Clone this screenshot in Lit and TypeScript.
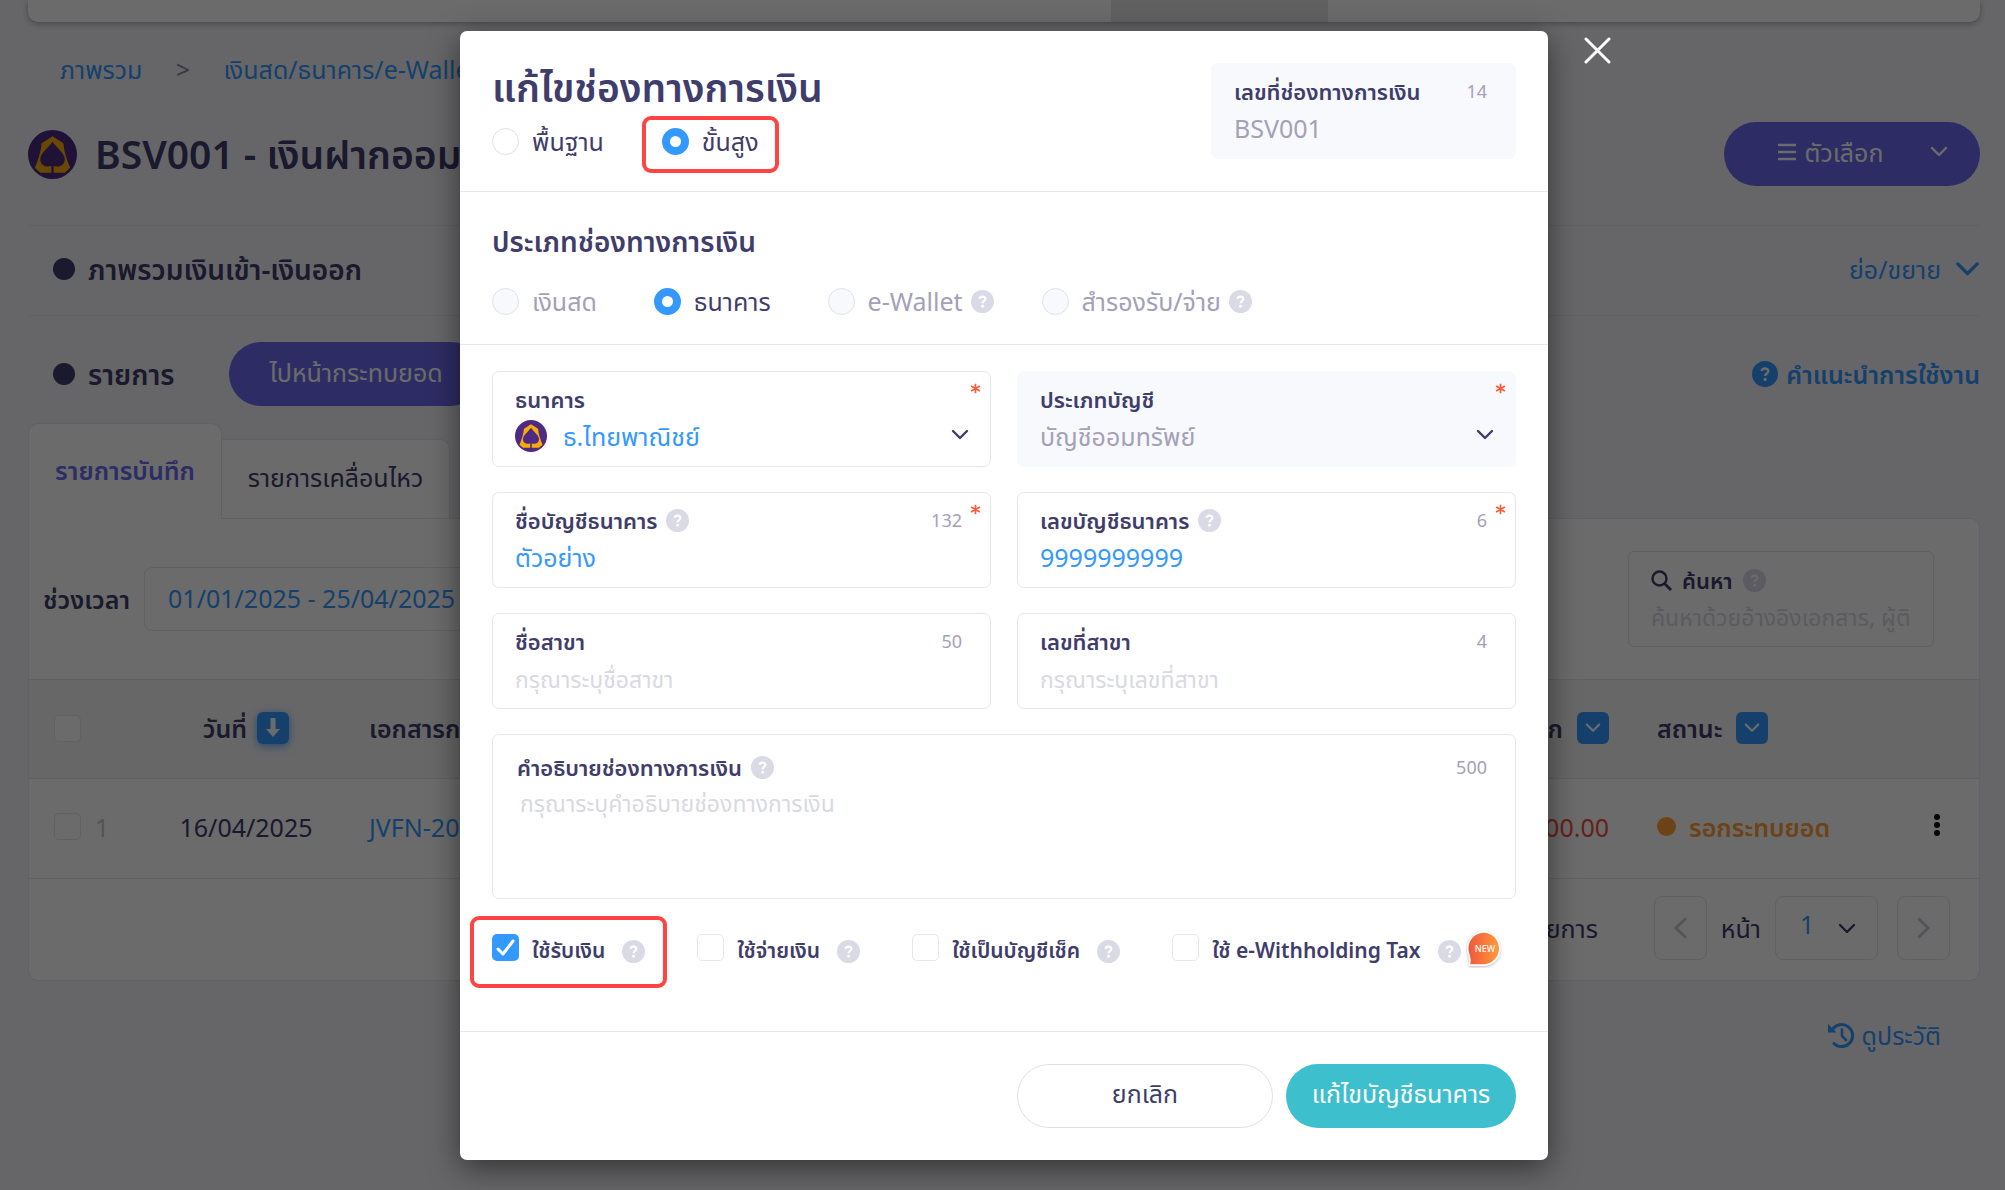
import { LitElement, html, css, svg } from "lit";
import { customElement, property } from "lit/decorators.js";

const chevron = (cls = "") => html`<svg class="chev ${cls}" viewBox="0 0 18 12" aria-hidden="true"><path d="M2 2l7 7 7-7" fill="none" stroke="currentColor" stroke-width="2.4" stroke-linecap="round" stroke-linejoin="round"/></svg>`;

const bankLogo = (cls = "") => html`<svg class="bank ${cls}" viewBox="0 0 50 50" aria-hidden="true">
  <circle cx="25" cy="25" r="25" fill="#4e2a84"/>
  <path fill="#fbaa0b" d="M25 6.500L36 13.500C37 23 39.500 30 43 38.500L37.500 43.500H26.200V36.800C32 38.500 37.500 35.500 37.500 30C37.500 24 31 20 25 12C19 20 12.500 24 12.500 30C12.500 35.500 18 38.500 23.800 36.800V43.500H12.500L7 38.500C10.500 30 13 23 14 13.500Z"/>
</svg>`;

@customElement("help-mark")
class HelpMark extends LitElement {
  @property() tone = "muted";
  static styles = css`
    :host { display: inline-flex; flex: none; width: 23px; height: 23px; color: #dadae6; }
    :host([tone="blue"]) { width: 26px; height: 26px; color: #3399ff; }
    svg { width: 100%; height: 100%; display: block; }
  `;
  render() {
    return html`<svg viewBox="0 0 24 24" aria-hidden="true"><circle cx="12" cy="12" r="12" fill="currentColor"/>${svg`<path d="M9 9.200c.2-3 6-3.200 6 0 0 2.300-2.900 2.300-2.900 4.700" fill="none" stroke="#fff" stroke-width="2.200"/><circle cx="12.100" cy="17" r="1.500" fill="#fff"/>`}</svg>`;
  }
}

interface Choice { label: string; checked?: boolean; disabled?: boolean; help?: boolean; mark?: boolean; badge?: boolean; }

@customElement("app-root")
class AppRoot extends LitElement {
  modes: Choice[] = [{ label: "พื้นฐาน" }, { label: "ขั้นสูง", checked: true, mark: true }];
  kinds: Choice[] = [
    { label: "เงินสด", disabled: true },
    { label: "ธนาคาร", checked: true },
    { label: "e-Wallet", disabled: true, help: true },
    { label: "สำรองรับ/จ่าย", disabled: true, help: true },
  ];
  uses: Choice[] = [
    { label: "ใช้รับเงิน", checked: true, mark: true },
    { label: "ใช้จ่ายเงิน" },
    { label: "ใช้เป็นบัญชีเช็ค" },
    { label: "ใช้ e-Withholding Tax", badge: true },
  ];

  static styles = css`
    :host {
      --ink: #3f3d6b; --blue: #3399ff; --purple: #6e69ee; --line: #e6e6ef; --grey: #a3a1b8;
      display: block; position: relative; min-height: 100vh; overflow: hidden;
      background: #f3f3f8; color: var(--ink);
      font-family: "Noto Sans", "Noto Sans Thai", sans-serif; font-size: 25px; line-height: 36px;
    }
    *, *::before, *::after { box-sizing: border-box; }
    button, input, select, textarea { font: inherit; color: inherit; margin: 0; padding: 0; border: 0; background: none; outline: 0; }
    select { appearance: none; }
    button { cursor: pointer; }
    a { color: var(--blue); text-decoration: none; }
    h1, h2, h3 { margin: 0; font-weight: 600; }
    .chev { width: 18px; height: 12px; flex: none; }
    .chev.big { width: 25px; height: 17px; }
    .bank { width: 49px; height: 49px; flex: none; }
    .bank.small { width: 32px; height: 32px; }

    .page { padding: 0 25px 0 28px; }
    .topbar { height: 22px; background: #fff; border-radius: 0 0 10px 10px; box-shadow: 0 2px 6px rgba(0,0,0,.3); display: grid; grid-template-columns: 1083fr 217fr 652fr; }
    .topbar i { grid-column: 2; background: #e4e4e6; }
    .crumbs { display: flex; padding: 29px 32px 0; height: 82px; }
    .crumbs span { width: 81px; text-align: center; color: #85849b; }
    .titlebar { display: flex; align-items: center; gap: 18px; height: 122px; border-bottom: 1px solid var(--line); padding-bottom: 21px; }
    .titlebar h1 { font-size: 39px; line-height: 56px; flex: 1; }
    .pill { height: 64px; border-radius: 32px; background: var(--purple); color: #fff; display: inline-flex; align-items: center; justify-content: center; padding-bottom: 4px; }
    .options { width: 256px; gap: 9px; padding-left: 22px; }
    .options .chev { margin-left: 38px; }
    .options .menu { width: 18px; height: 18px; }
    .section { display: flex; align-items: center; height: 90px; padding-left: 25px; gap: 13px; }
    .section.first { border-bottom: 1px solid var(--line); padding-bottom: 3px; }
    .section.list { height: 107px; padding-top: 8px; }
    .section h2 { font-size: 28px; }
    .dot { width: 22px; height: 22px; border-radius: 50%; background: var(--ink); flex: none; }
    .section .push { margin-left: auto; display: flex; align-items: center; gap: 14px; }
    .section .guide { font-weight: 600; gap: 8px; }
    .section .reconcile { padding: 0 40px 4px; margin-left: 42px; }
    .tabs { display: flex; align-items: flex-end; height: 96px; margin-bottom: -1px; position: relative; }
    .tab { background: #fff; border: 1px solid var(--line); display: flex; align-items: center; justify-content: center; padding-bottom: 4px; }
    .tab.on { height: 96px; width: 194px; border-radius: 10px 10px 0 0; border-bottom: 0; color: var(--purple); font-weight: 600; }
    .tab.off { height: 80px; width: 228px; border-radius: 0 10px 0 0; border-left: 0; }
    .card { background: #fff; border: 1px solid var(--line); border-radius: 0 10px 10px 10px; }
    .filters { display: flex; justify-content: space-between; align-items: center; height: 160px; padding: 0 45px 0 14px; }
    .period { display: flex; align-items: center; gap: 14px; font-weight: 600; }
    .period input { width: 336px; height: 64px; border: 1px solid var(--line); border-radius: 8px; padding: 0 23px 2px; color: var(--blue); font-weight: 400; }
    .search { width: 306px; height: 96px; border: 1px solid var(--line); border-radius: 6px; padding: 11px 22px 0; }
    .search label { display: flex; align-items: center; gap: 10px; font-size: 22px; line-height: 34px; font-weight: 600; }
    .search svg { width: 21px; height: 21px; }
    .search input { width: 100%; height: 40px; font-size: 23px; }
    ::placeholder { color: #d9d9e3; opacity: 1; }
    table { width: 100%; border-collapse: collapse; table-layout: fixed; }
    th { background: #f5f5f7; font-weight: 600; text-align: left; }
    th, td { height: 99px; padding: 0 0 4px; border-top: 1px solid var(--line); border-bottom: 1px solid var(--line); white-space: nowrap; }
    th { padding-bottom: 2px; }
    td { height: 100px; }
    .c1 { width: 94px; } .c2 { width: 246px; } .c4 { width: 300px; } .c5 { width: 276px; } .c6 { width: 46px; }
    .cell { display: flex; align-items: center; gap: 14px; }
    .cell.pad { padding-left: 25px; }
    .cell.mid { justify-content: center; gap: 10px; }
    .cell.end { justify-content: flex-end; padding-right: 48px; }
    .box { appearance: none; width: 27px; height: 27px; border: 1px solid var(--line); border-radius: 5px; flex: none; background: #fff; }
    .rowno { color: #c5c5cc; }
    .sq { width: 32px; height: 32px; border-radius: 6px; background: var(--blue); color: #fff; display: inline-flex; align-items: center; justify-content: center; }
    .sq.glow { box-shadow: 0 2px 8px rgba(51,153,255,.8); }
    .sq svg { width: 16px; }
    .sq.glow svg { height: 20px; }
    .out { color: #f0503a; }
    .status { color: #ff9f38; font-weight: 600; gap: 13px; }
    .status i { width: 19px; height: 19px; border-radius: 50%; background: #ff9f38; }
    .kebab svg { width: 8px; height: 24px; display: block; }
    .pager { display: flex; align-items: center; justify-content: flex-end; height: 101px; padding: 0 29px 4px 0; gap: 14px; }
    .pager button { width: 53px; height: 64px; border: 1px solid var(--line); border-radius: 8px; color: #c6c5d3; display: grid; place-items: center; }
    .pager button svg { width: 14px; height: 22px; }
    .pager .total { margin-right: 42px; }
    .pager .sel { position: relative; width: 103px; height: 64px; border: 1px solid var(--line); border-radius: 8px; display: flex; align-items: center; margin-right: 5px; }
    .pager select { width: 100%; height: 100%; padding: 0 0 8px 24px; color: var(--blue); }
    .sel .chev { position: absolute; right: 21px; top: 26px; pointer-events: none; }
    .history { display: flex; justify-content: flex-end; align-items: center; gap: 7px; padding: 36px 39px 0; }
    .history svg { width: 27px; height: 27px; }

    .overlay { position: absolute; inset: 0; background: rgba(0,0,0,.58); padding: 31px 24px 0 27px; display: flex; justify-content: center; align-items: flex-start; }
    .modal { position: relative; width: 100%; max-width: 1088px; background: #fff; border-radius: 7px; box-shadow: 0 8px 30px rgba(0,0,0,.5); }
    .close { position: absolute; left: 100%; top: 0; margin-left: 29px; width: 40px; height: 38px; display: grid; place-items: center; color: #fff; }
    .close svg { width: 27px; height: 27px; }
    .part { padding: 0 32px; border-bottom: 1px solid var(--line); }
    .head { display: flex; justify-content: space-between; align-items: flex-start; height: 161px; padding-top: 32px; }
    .head h2 { font-size: 39px; line-height: 48px; }
    .type { height: 153px; padding-top: 31px; }
    .type h3 { font-size: 28px; line-height: 36px; }
    .choices { display: flex; align-items: center; }
    .head .choices { gap: 58px; margin-top: 12px; }
    .type .choices { gap: 57px; margin-top: 24px; }
    .choice { display: flex; align-items: center; gap: 13px; position: relative; white-space: nowrap; }
    .choice.dim { color: var(--grey); }
    .type help-mark { margin: 0 -9px 0 -5px; }
    .choice.mark::after { content: ""; position: absolute; inset: -7px -20px -14px; border: 4px solid #ff4444; border-radius: 9px; pointer-events: none; }
    .radio { appearance: none; width: 27px; height: 27px; border-radius: 50%; border: 1px solid #e0e0ec; flex: none; background: #fff; }
    .radio:checked { border: 8px solid var(--blue); }
    .radio:disabled { background: #f8f9fd; }
    .form { padding-top: 26px; padding-bottom: 61px; display: grid; grid-template-columns: 1fr 1fr; gap: 25px 26px; }
    .field { position: relative; min-height: 96px; border: 1px solid var(--line); border-radius: 7px; padding: 13px 22px 0; display: flex; flex-direction: column; gap: 5px; }
    .field.off { background: #f8f9fd; border-color: #f8f9fd; }
    .field.num { width: 305px; }
    .top { display: flex; align-items: center; gap: 9px; line-height: 28px; }
    .top label { font-size: 22px; font-weight: 600; }
    .top output { margin-left: auto; font-size: 18px; color: var(--grey); margin-right: 6px; }
    .field input, .field select { width: 100%; height: 36px; flex: 1; min-width: 0; color: var(--blue); }
    .field.off input, .field.off select { color: var(--grey); opacity: 1; }
    .val { display: flex; align-items: center; gap: 16px; height: 36px; }
    .val .chev { color: var(--ink); position: absolute; right: 21px; top: 57px; pointer-events: none; }
    .star { position: absolute; right: 9px; top: 11px; width: 11px; height: 11px; color: #ff5a36; }
    .area { grid-column: 1 / -1; min-height: 165px; padding-top: 18px; padding-left: 24px; }
    .area textarea { width: 100%; height: 100px; resize: none; font-size: 23px; line-height: 34px; padding-left: 3px; }
    .field input::placeholder { font-size: 23px; }
    .uses { grid-column: 1 / -1; display: flex; align-items: center; gap: 52px; height: 46px; }
    .uses .choice { font-size: 21px; font-weight: 600; }
    .uses label { padding-top: 5px; }
    .uses .choice help-mark { margin: 8px 0 0 4px; }
    .uses .choice.mark::after { inset: -11px -22px -20px; }
    .uses .box:checked { border: 0; background: var(--blue); }
    .tick { position: absolute; left: 4px; top: 12px; width: 19px; height: 18px; pointer-events: none; }
    .badge { width: 37px; height: 38px; margin-left: -8px; margin-top: 4px; }
    .badge text { font-size: 9px; font-weight: 500; fill: #fff; }
    .foot { display: flex; justify-content: flex-end; gap: 13px; padding: 32px; }
    .foot button { height: 64px; border-radius: 32px; padding-bottom: 6px; }
    .foot .cancel { width: 256px; border: 1px solid #e0e0ec; }
    .foot .save { min-width: 230px; background: #3dbfcd; color: #fff; }
  `;

  choice(c: Choice, name: string, i: number) {
    const box = name === "use";
    return html`<div class="choice ${c.disabled ? "dim" : ""} ${c.mark ? "mark" : ""}">
      <input id="${name}${i}" class=${box ? "box" : "radio"} type=${box ? "checkbox" : "radio"} name=${name} ?checked=${c.checked} ?disabled=${c.disabled}>
      ${box && c.checked ? html`<svg class="tick" viewBox="0 0 19 18" aria-hidden="true"><path d="M2 10l5 5L17 2" fill="none" stroke="#fff" stroke-width="3" stroke-linecap="round" stroke-linejoin="round"/></svg>` : ""}
      <label for="${name}${i}">${c.label}</label>
      ${c.help || box ? html`<help-mark></help-mark>` : ""}
      ${c.badge ? html`<svg class="badge" viewBox="0 0 37 38"><defs><linearGradient id="g"><stop stop-color="#f1553a"/><stop offset="1" stop-color="#ff9c3c"/></linearGradient><filter id="s" x="-20%" y="-20%" width="140%" height="140%"><feDropShadow dx="0" dy="1" stdDeviation="1.500" flood-opacity=".3"/></filter></defs><path filter="url(#s)" d="M3.500 35C4.500 31 4.500 29 3 25A16 16.500 0 1 1 19 35Z" fill="url(#g)" stroke="#fff" stroke-width="1.500"/><text x="19" y="22" text-anchor="middle">NEW</text></svg>` : ""}
    </div>`;
  }

  top(id: string, label: string, count = "", help = false) {
    return html`<div class="top"><label for=${id}>${label}</label>${help ? html`<help-mark></help-mark>` : ""}${count ? html`<output>${count}</output>` : ""}</div>`;
  }

  star() {
    return html`<svg class="star" viewBox="0 0 12 12" aria-hidden="true"><path d="M6 .8v10.400M1.200 3.300l9.600 5.400M10.800 3.300L1.200 8.700" stroke="currentColor" stroke-width="1.800"/></svg>`;
  }

  text(id: string, label: string, count: string, o: { value?: string; hint?: string; help?: boolean; req?: boolean }) {
    return html`<div class="field">${this.top(id, label, count, o.help)}
      <div class="val"><input id=${id} type="text" .value=${o.value ?? ""} placeholder=${o.hint ?? ""}></div>${o.req ? this.star() : ""}</div>`;
  }

  render() {
    return html`
      <main class="page">
        <div class="topbar"><i></i></div>
        <nav class="crumbs"><a href="#overview">ภาพรวม</a><span>&gt;</span><a href="#finance">เงินสด/ธนาคาร/e-Wallet</a></nav>
        <header class="titlebar">${bankLogo()}<h1>BSV001 - เงินฝากออม</h1>
          <button class="pill options"><svg class="menu" viewBox="0 0 18 18" aria-hidden="true"><path d="M0 2h18M0 9h18M0 16h18" stroke="currentColor" stroke-width="2.400"/></svg>ตัวเลือก${chevron()}</button>
        </header>
        <section class="section first"><i class="dot"></i><h2>ภาพรวมเงินเข้า-เงินออก</h2><a class="push" href="#toggle">ย่อ/ขยาย${chevron("big")}</a></section>
        <section class="section list"><i class="dot"></i><h2>รายการ</h2><button class="pill reconcile">ไปหน้ากระทบยอด</button>
          <a class="push guide" href="#guide"><help-mark tone="blue"></help-mark>คำแนะนำการใช้งาน</a></section>
        <div class="tabs"><button class="tab on">รายการบันทึก</button><button class="tab off">รายการเคลื่อนไหว</button></div>
        <section class="card">
          <div class="filters">
            <div class="period"><label for="period">ช่วงเวลา</label><input id="period" type="text" value="01/01/2025 - 25/04/2025"></div>
            <div class="search"><label for="q"><svg viewBox="0 0 21 21" aria-hidden="true"><circle cx="8.500" cy="8.500" r="7" fill="none" stroke="currentColor" stroke-width="2.400"/><path d="M13.500 13.500L20 20" stroke="currentColor" stroke-width="2.800"/></svg>ค้นหา<help-mark></help-mark></label>
              <input id="q" type="text" placeholder="ค้นหาด้วยอ้างอิงเอกสาร, ผู้ติดต่อ"></div>
          </div>
          <table>
            <colgroup><col class="c1"><col class="c2"><col><col class="c4"><col class="c5"><col class="c6"></colgroup>
            <thead><tr>
              <th><div class="cell pad"><input class="box" type="checkbox" aria-label="เลือกทั้งหมด"></div></th>
              <th><div class="cell mid">วันที่<button class="sq glow" aria-label="เรียงลำดับ"><svg viewBox="0 0 14 20" aria-hidden="true"><path d="M4.500 0h5v11H14l-7 8-7-8h4.500z" fill="currentColor"/></svg></button></div></th>
              <th>เอกสารการเงิน</th>
              <th><div class="cell end">เงินออก<button class="sq" aria-label="กรองเงินออก">${chevron()}</button></div></th>
              <th><div class="cell">สถานะ<button class="sq" aria-label="กรองสถานะ">${chevron()}</button></div></th>
              <th></th>
            </tr></thead>
            <tbody><tr>
              <td><div class="cell pad"><input class="box" type="checkbox" aria-label="เลือกแถว 1"><span class="rowno">1</span></div></td>
              <td><div class="cell mid">16/04/2025</div></td>
              <td><a href="#doc">JVFN-20250400001</a></td>
              <td><div class="cell end out">1,000.00</div></td>
              <td><div class="cell status"><i></i>รอกระทบยอด</div></td>
              <td><button class="kebab" aria-label="เมนู"><svg viewBox="0 0 8 24" fill="#101014" aria-hidden="true"><circle cx="4" cy="4" r="3"/><circle cx="4" cy="12" r="3"/><circle cx="4" cy="20" r="3"/></svg></button></td>
            </tr></tbody>
          </table>
          <div class="pager"><span class="total">1 รายการ</span>
            <button aria-label="ก่อนหน้า"><svg viewBox="0 0 14 22"><path d="M12 2l-9 9 9 9" fill="none" stroke="currentColor" stroke-width="2.800" stroke-linecap="round"/></svg></button>
            <label for="pg">หน้า</label><span class="sel"><select id="pg"><option>1</option></select>${chevron()}</span>
            <button aria-label="ถัดไป"><svg viewBox="0 0 14 22"><path d="M2 2l9 9-9 9" fill="none" stroke="currentColor" stroke-width="2.800" stroke-linecap="round"/></svg></button></div>
        </section>
        <a class="history" href="#history"><svg viewBox="0 0 27 27" aria-hidden="true"><path d="M4.500 7.500A11 11 0 1 1 6 21.500" fill="none" stroke="currentColor" stroke-width="3" stroke-linecap="round"/><path d="M0 2v8.500h8.500z" fill="currentColor"/><path d="M14 7.500v6.500l4 4" fill="none" stroke="currentColor" stroke-width="2.600" stroke-linecap="round"/></svg>ดูประวัติ</a>
      </main>

      <div class="overlay"><div class="modal" role="dialog" aria-labelledby="ttl">
        <button class="close" aria-label="ปิด"><svg viewBox="0 0 27 27"><path d="M2 2l23 23M25 2L2 25" stroke="currentColor" stroke-width="3" stroke-linecap="round"/></svg></button>
        <div class="part head">
          <div><h2 id="ttl">แก้ไขช่องทางการเงิน</h2><div class="choices">${this.modes.map((c, i) => this.choice(c, "mode", i))}</div></div>
          <div class="field off num">${this.top("code", "เลขที่ช่องทางการเงิน", "14")}<div class="val"><input id="code" type="text" value="BSV001" disabled></div></div>
        </div>
        <div class="part type"><h3>ประเภทช่องทางการเงิน</h3><div class="choices">${this.kinds.map((c, i) => this.choice(c, "kind", i))}</div></div>
        <div class="part form">
          <div class="field">${this.top("bank", "ธนาคาร")}<div class="val">${bankLogo("small")}<select id="bank"><option>ธ.ไทยพาณิชย์</option></select>${chevron()}</div>${this.star()}</div>
          <div class="field off">${this.top("acct", "ประเภทบัญชี")}<div class="val"><select id="acct" disabled><option>บัญชีออมทรัพย์</option></select>${chevron()}</div>${this.star()}</div>
          ${this.text("name", "ชื่อบัญชีธนาคาร", "132", { value: "ตัวอย่าง", help: true, req: true })}
          ${this.text("no", "เลขบัญชีธนาคาร", "6", { value: "9999999999", help: true, req: true })}
          ${this.text("branch", "ชื่อสาขา", "50", { hint: "กรุณาระบุชื่อสาขา" })}
          ${this.text("branchno", "เลขที่สาขา", "4", { hint: "กรุณาระบุเลขที่สาขา" })}
          <div class="field area">${this.top("desc", "คำอธิบายช่องทางการเงิน", "500", true)}<textarea id="desc" placeholder="กรุณาระบุคำอธิบายช่องทางการเงิน"></textarea></div>
          <div class="uses">${this.uses.map((c, i) => this.choice(c, "use", i))}</div>
        </div>
        <div class="foot"><button class="cancel">ยกเลิก</button><button class="save">แก้ไขบัญชีธนาคาร</button></div>
      </div></div>`;
  }
}
